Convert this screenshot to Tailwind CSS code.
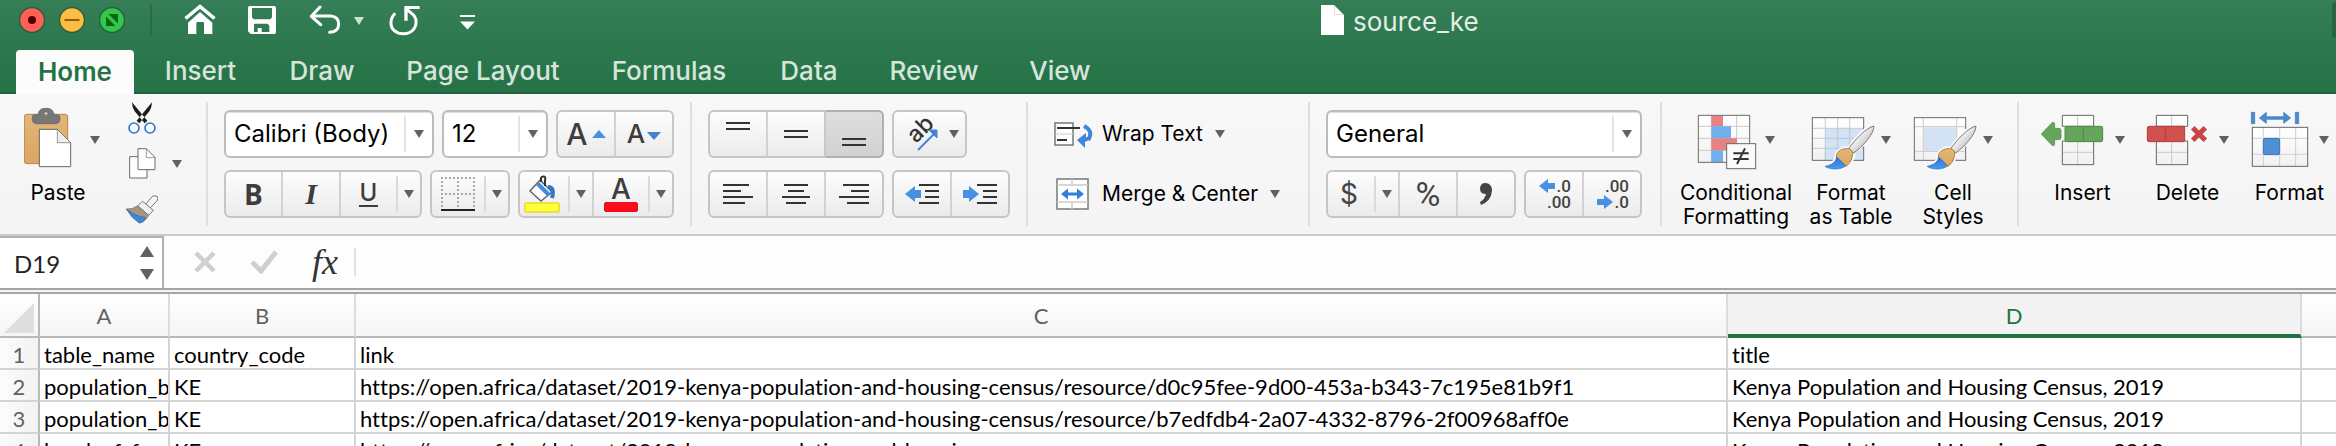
<!DOCTYPE html>
<html lang="en">
<head>
<meta charset="utf-8">
<title>source_ke</title>
<script src="https://cdn.jsdelivr.net/npm/@tailwindcss/browser@4"></script>
</head>
<body class="flex h-screen flex-col overflow-hidden bg-white font-['Inter','Liberation_Sans',sans-serif] text-black">

<svg class="absolute size-0" aria-hidden="true">
  <defs>
    <symbol id="caret" viewBox="0 0 10 8"><path d="M0 0h10L5 8z" fill="currentColor"/></symbol>
    <linearGradient id="sheet" x1="0" y1="0" x2="0" y2="1"><stop offset="0" stop-color="#fff"/><stop offset="1" stop-color="#f1f1f1"/></linearGradient>
    <linearGradient id="handle" x1="0" y1="0" x2="1" y2="1"><stop offset="0.3" stop-color="#fff"/><stop offset="0.7" stop-color="#c4c4c4"/></linearGradient>
    <linearGradient id="wood" x1="0" y1="0" x2="0" y2="1"><stop offset="0" stop-color="#e2b67a"/><stop offset="1" stop-color="#dba661"/></linearGradient>
    <linearGradient id="paint" x1="0" y1="0" x2="0" y2="1"><stop offset="0" stop-color="#2f74cf"/><stop offset="1" stop-color="#4a9bf2"/></linearGradient>
    <symbol id="brush" viewBox="0 0 160 140">
      <path d="M152 2C128 8 88 46 78 72C54 66 38 82 36 100C34 114 24 122 4 126C20 140 60 140 74 120C88 106 92 92 88 84C112 70 148 40 152 2z" fill="#fff" stroke="#fafafa" stroke-width="10" stroke-linejoin="round"/>
      <path d="M151 5C130 8 90 50 76 72L90 86C116 68 152 28 151 5z" fill="url(#handle)" stroke="#777" stroke-width="3"/>
      <path d="M38 98C38 84 50 74 66 73C82 71 90 80 86 96C83 112 76 118 68 126z" fill="url(#wood)" stroke="#b07d35" stroke-width="3"/>
      <path d="M39 98C36 114 24 122 4 126C22 138 52 136 66 125z" fill="url(#paint)" stroke="#2a66b5" stroke-width="2"/>
    </symbol>
  </defs>
</svg>

<header class="shrink-0 border-b-2 border-[#1f603d] bg-linear-to-b from-[#357e57] to-[#257246]">
  <div class="flex h-[50px] items-start">
    <div class="flex h-10 items-center gap-[14px] pl-[19px]">
      <button aria-label="Close" class="size-[26px]"><svg viewBox="0 0 26 26"><circle cx="13" cy="13" r="12.5" fill="#ff5f57" stroke="#27613f" stroke-width="1.5"/><circle cx="13" cy="13" r="4" fill="#4d0000"/></svg></button>
      <button aria-label="Minimize" class="size-[26px]"><svg viewBox="0 0 26 26"><circle cx="13" cy="13" r="12.5" fill="#febc40" stroke="#27613f" stroke-width="1.5"/><path d="M5.500 13h15" stroke="#985712" stroke-width="2"/></svg></button>
      <button aria-label="Zoom" class="size-[26px]"><svg viewBox="0 0 26 26"><circle cx="13" cy="13" r="12.500" fill="#34c848" stroke="#27613f" stroke-width="1.500"/><path d="M9.500 7H19v9.500zM7 9.500V19h9.500z" fill="#0b6412"/></svg></button>
    </div>
    <div class="mt-1 ml-[25px] h-8 w-[2px] bg-[#2a6a47]"></div>
    <button aria-label="Home" class="mt-1 ml-8"><svg class="h-[31px] w-8" viewBox="552 12 96 93"><path d="M553 52L600 13L647 52L640 59L600 26L560 59z" fill="#fff"/><path d="M564 68L600 36L637 68V102H612V70Q612 66 608 66H593Q589 66 589 70V102H564z" fill="#fff"/></svg></button>
    <button aria-label="Save" class="mt-[5px] ml-8"><svg class="h-[30px] w-7" viewBox="744 15 84 90"><path fill-rule="evenodd" d="M749 18H823Q828 18 828 23V97Q828 102 823 102H752L744 94V23Q744 18 749 18zM756 24V52L761 58H811L816 52V24zM762 72V96H773V84H785V96H808V77L803 71H767z" fill="#fff"/></svg></button>
    <button aria-label="Undo" class="mt-[5px] ml-[33px]"><svg class="h-[31px] w-[32px]" viewBox="927 15 96 93"><path d="M960 21L934 49L962 74M935 48H992Q1016 50 1016 72Q1016 96 989 97" fill="none" stroke="#fff" stroke-width="9" stroke-linecap="round" stroke-linejoin="round"/></svg></button>
    <button aria-label="Undo history" class="mt-[17px] ml-[13px] text-[#d2e1d8]"><svg class="h-2 w-[10px]"><use href="#caret"/></svg></button>
    <button aria-label="Redo" class="mt-[5px] ml-[25px]"><svg class="h-[31px] w-[31px]" viewBox="1168 15 93 93"><path d="M1187 40C1170 54 1170 80 1184 92C1200 106 1226 104 1240 90C1254 74 1252 52 1236 40L1220 27" fill="none" stroke="#fff" stroke-width="9"/><path d="M1214 18H1260V27H1224V62H1214z" fill="#fff"/></svg></button>
    <button aria-label="Customize toolbar" class="mt-[15px] ml-10"><svg class="h-[15px] w-[15px]" viewBox="0 0 15 15"><path d="M0 0h15v2H0zM0 6.500h15L7.500 14.500z" fill="#fff"/></svg></button>
    <div class="ml-[846px] flex h-10 items-center gap-[9px]">
      <svg class="h-[30px] w-[23px]" viewBox="0 0 23 30"><path d="M0 0H13L23 10V30H0z" fill="#fff"/><path d="M13.500 1V9.500H22" fill="none" stroke="#ddd" stroke-width="1"/></svg>
      <h1 class="pt-1 text-[26px] leading-7 text-[#e2ede6]">source_ke</h1>
    </div>
    <div class="mt-[2px] ml-auto h-9 w-1 rounded-l bg-[#2b6343]"></div>
  </div>
  <nav aria-label="Ribbon tabs" class="flex h-[42px] pl-4 text-[26px] leading-[42px] font-medium text-[#d6e5db]">
    <button class="-mb-[2px] mr-1 w-[118px] rounded-t-[4px] bg-[#fcfcfc] font-semibold text-[#257246]">Home</button>
    <button class="w-[125px]">Insert</button>
    <button class="w-[118px]">Draw</button>
    <button class="w-[204px]">Page Layout</button>
    <button class="w-[168px]">Formulas</button>
    <button class="w-[112px]">Data</button>
    <button class="w-[138px]">Review</button>
    <button class="w-[114px]">View</button>
  </nav>
</header>

<section aria-label="Home ribbon" class="flex h-[142px] shrink-0 items-start border-b-2 border-[#cbcbcb] bg-linear-to-b from-[#f8f8f8] to-[#f4f4f4] text-[21px] leading-6 text-[#616161]">

  <button class="mt-3 ml-4 flex w-[84px] flex-col">
    <span class="flex items-center gap-[18px] pl-2">
      <svg class="h-[68px] w-12" viewBox="72 318 144 204">
        <rect x="73" y="343" width="130" height="148" rx="8" fill="url(#wood)" stroke="#b98747" stroke-width="3"/>
        <path fill-rule="evenodd" d="M104 344H114C116 330 124 325 138 325S160 330 162 344H172Q180 344 180 352V360Q178 371 166 371H110Q98 371 97 360V352Q97 344 104 344zM138 336a6 6 0 1 0 .1 0z" fill="#777" stroke="#5f5f5f" stroke-width="2"/>
        <path d="M118 388H172L212 428V500H118z" fill="#fff" stroke="#666" stroke-width="3"/><path d="M172 389V428H211" fill="#eee" stroke="#666" stroke-width="2"/>
      </svg>
      <svg class="h-2 w-[10px]"><use href="#caret"/></svg>
    </span>
    <span class="mt-[7px] self-center text-black">Paste</span>
  </button>
  <div class="mt-2 ml-6 flex w-[60px] flex-col items-start">
    <button aria-label="Cut"><svg class="ml-1 h-8 w-7" viewBox="384 306 84 96"><path d="M396 307Q396 322 404 334L434 370L442 362zM456 307Q456 322 448 334L418 370L410 362z" fill="#1b1b1b"/><g fill="#fff" stroke="#2f78cc" stroke-width="5"><circle cx="402" cy="384" r="15"/><circle cx="450" cy="384" r="15"/></g></svg></button>
    <button aria-label="Copy" class="mt-[14px] flex w-full items-center justify-between pl-[5px] pr-[2px]"><svg class="h-[31px] w-[27px]" viewBox="386 446 81 93"><path d="M388 472H440V536H388z" fill="#fff" stroke="#6a6a6a" stroke-width="3"/><path d="M413 448H438L464 474V511H413z" fill="#fff" stroke="#6a6a6a" stroke-width="3"/><path d="M438 449V475H463" fill="none" stroke="#6a6a6a" stroke-width="2"/></svg><svg class="h-2 w-[10px]"><use href="#caret"/></svg></button>
    <button aria-label="Format painter" class="mt-4 ml-[2px]"><svg class="h-[29px] w-8" viewBox="378 587 96 87"><path d="M436 616L456 592Q466 586 472 592Q476 598 470 606L448 628z" fill="#f6f6f6" stroke="#777" stroke-width="3"/><path d="M413 619L428 606L460 633L446 648z" fill="#efefef" stroke="#777" stroke-width="3"/><path d="M411 620Q398 630 379 629L418 671Q436 668 446 648z" fill="#a9957c" stroke="#746b5e" stroke-width="2"/><path d="M379 629Q408 652 436 654Q434 668 418 671Q394 656 379 629z" fill="#3f86d8" stroke="#2b69b3" stroke-width="2"/></svg></button>
  </div>

  <div class="mt-2 ml-[22px] h-[124px] w-[2px] bg-[#dfdfdf]"></div>

  <div class="mt-4 ml-4 flex flex-col gap-3">
    <div class="flex gap-2">
      <div class="flex h-12 w-[210px] items-center rounded-[6px] border-2 border-[#bcbcbc] bg-white pr-2 shadow-[inset_0_1px_1px_#ddd]">
        <select aria-label="Font" class="min-w-0 flex-1 appearance-none bg-transparent pl-2 text-[24px] leading-8 text-black"><option>Calibri (Body)</option></select>
        <span class="mr-2 h-9 w-[2px] bg-[#e4e4e4]"></span><svg class="h-2 w-[10px]"><use href="#caret"/></svg>
      </div>
      <div class="flex h-12 w-[106px] items-center rounded-[6px] border-2 border-[#bcbcbc] bg-white pr-2 shadow-[inset_0_1px_1px_#ddd]">
        <select aria-label="Font size" class="min-w-0 flex-1 appearance-none bg-transparent pl-2 text-[24px] leading-8 text-black"><option>12</option></select>
        <span class="mr-2 h-9 w-[2px] bg-[#e4e4e4]"></span><svg class="h-2 w-[10px]"><use href="#caret"/></svg>
      </div>
      <div class="flex h-12 w-[118px] rounded-[6px] border-2 border-[#c6c6c6] bg-linear-to-b from-[#fdfdfd] to-[#ebebeb] font-medium text-[#3d3d3d]">
        <button aria-label="Increase font size" class="flex flex-1 items-center justify-center gap-1 border-r-2 border-[#d2d2d2]"><span class="text-[30px]">A</span><svg class="h-2 w-[14px]" viewBox="0 0 14 8"><path d="M7 0L14 8H0z" fill="#4790e2"/></svg></button>
        <button aria-label="Decrease font size" class="flex flex-1 items-center justify-center gap-[2px]"><span class="text-[26px]">A</span><svg class="mt-1 h-2 w-[14px]" viewBox="0 0 14 8"><path d="M0 0H14L7 8z" fill="#4382cd"/></svg></button>
      </div>
    </div>
    <div class="flex gap-2 text-[#3d3d3d]">
      <div class="flex h-12 w-[198px] items-stretch rounded-[6px] border-2 border-[#c6c6c6] bg-linear-to-b from-[#fdfdfd] to-[#ebebeb]">
        <button aria-label="Bold" class="w-[57px] border-r-2 border-[#d2d2d2] font-['Open_Sans',sans-serif] text-[28px] font-bold">B</button>
        <button aria-label="Italic" class="w-[58px] border-r-2 border-[#d2d2d2] font-['Liberation_Serif',serif] text-[30px] font-bold italic">I</button>
        <button aria-label="Underline" class="flex flex-1 items-center justify-center"><span class="border-b-2 border-[#3d3d3d] px-[1px] text-[24px] font-medium">U</span></button>
        <span class="my-1 w-[2px] bg-[#dadada]"></span>
        <button aria-label="Underline style" class="flex w-[22px] items-center justify-center text-[#616161]"><svg class="h-2 w-[10px]"><use href="#caret"/></svg></button>
      </div>
      <div class="flex h-12 w-[80px] items-stretch rounded-[6px] border-2 border-[#c6c6c6] bg-linear-to-b from-[#fdfdfd] to-[#ebebeb]">
        <button aria-label="Borders" class="flex flex-1 items-center justify-center"><svg class="size-9" viewBox="0 0 36 36"><path d="M1 2H35M2 1V31M1 18H35M18 1V31M34 1V31" fill="none" stroke="#a9a9a9" stroke-width="2" stroke-dasharray="2 2"/><path d="M1 34H35" stroke="#222" stroke-width="2"/></svg></button>
        <span class="my-1 w-[2px] bg-[#dadada]"></span>
        <button aria-label="Border style" class="flex w-[22px] items-center justify-center text-[#616161]"><svg class="h-2 w-[10px]"><use href="#caret"/></svg></button>
      </div>
      <div class="flex h-12 w-[156px] items-stretch rounded-[6px] border-2 border-[#c6c6c6] bg-linear-to-b from-[#fdfdfd] to-[#ebebeb]">
        <button aria-label="Fill color" class="flex w-[48px] items-center justify-center pr-1"><svg class="h-10 w-9" viewBox="0 0 36 40">
          <path d="M16 6L28 18L17 27L6 17z" fill="#fff" stroke="#666" stroke-width="1.500"/><path d="M12 11L15 8L26 19L23 22z" fill="#3f8de0"/><path d="M24 13Q31 13 28 24" fill="none" stroke="#2f7acb" stroke-width="4"/><path d="M17 8V4Q18 2 20 2.500Q22 3 21 6V12" fill="none" stroke="#333" stroke-width="2"/><rect x="1" y="29" width="34" height="9" rx="1" fill="#ffff3c" stroke="#e3dd22" stroke-width="1.500"/></svg></button>
        <span class="my-1 w-[2px] bg-[#dadada]"></span>
        <button aria-label="Fill color menu" class="flex w-[24px] items-center justify-center border-r-2 border-[#d2d2d2] text-[#616161]"><svg class="h-2 w-[10px]"><use href="#caret"/></svg></button>
        <button aria-label="Font color" class="flex flex-1 flex-col items-center justify-center"><span class="text-[28px] leading-[26px] font-medium">A</span><span class="h-[10px] w-[34px] rounded-[2px] border border-[#e01020] bg-[#ff0a1a]"></span></button>
        <span class="my-1 w-[2px] bg-[#dadada]"></span>
        <button aria-label="Font color menu" class="flex w-[22px] items-center justify-center text-[#616161]"><svg class="h-2 w-[10px]"><use href="#caret"/></svg></button>
      </div>
    </div>
  </div>

  <div class="mt-2 ml-4 h-[124px] w-[2px] bg-[#dfdfdf]"></div>

  <div class="mt-4 ml-4 flex flex-col gap-3 text-[#3d3d3d]">
    <div class="flex gap-2">
      <div class="flex h-12 w-[176px] rounded-[6px] border-2 border-[#c6c6c6] bg-linear-to-b from-[#fdfdfd] to-[#ebebeb]">
        <button aria-label="Top align" class="flex flex-1 items-center justify-center border-r-2 border-[#d2d2d2]"><svg class="h-9 w-6" viewBox="0 0 24 36"><path d="M0 7H24M0 13H24" stroke="#333" stroke-width="2"/></svg></button>
        <button aria-label="Middle align" class="flex flex-1 items-center justify-center border-r-2 border-[#c9c9c9]"><svg class="h-9 w-6" viewBox="0 0 24 36"><path d="M0 15H24M0 21H24" stroke="#333" stroke-width="2"/></svg></button>
        <button aria-label="Bottom align" aria-pressed="true" class="-my-[2px] -mr-[2px] flex flex-1 items-center justify-center rounded-r-[6px] border-y-2 border-r-2 border-[#b0b0b0] bg-linear-to-b from-[#dedede] to-[#d2d2d2]"><svg class="h-9 w-6" viewBox="0 0 24 36"><path d="M0 23H24M0 29H24" stroke="#333" stroke-width="2"/></svg></button>
      </div>
      <button aria-label="Orientation" class="flex h-12 w-[75px] items-center justify-between rounded-[6px] border-2 border-[#c6c6c6] bg-linear-to-b from-[#fdfdfd] to-[#ebebeb] pr-[6px] pl-[10px]">
        <svg class="h-9 w-9 overflow-visible" viewBox="0 0 36 36"><text x="0" y="0" transform="translate(12 28) rotate(-45)" font-family="Inter" font-size="23" font-weight="500" fill="#333">ab</text><path d="M14 34L30 18" stroke="#3f86d8" stroke-width="2"/><path d="M33 14V22L25 14z" fill="#3f86d8" stroke="#3f86d8"/></svg>
        <svg class="h-2 w-[10px] text-[#616161]"><use href="#caret"/></svg>
      </button>
    </div>
    <div class="flex gap-2">
      <div class="flex h-12 w-[176px] rounded-[6px] border-2 border-[#c6c6c6] bg-linear-to-b from-[#fdfdfd] to-[#ebebeb]">
        <button aria-label="Align left" class="flex flex-1 items-center justify-center border-r-2 border-[#d2d2d2]"><svg class="h-6 w-[30px]" viewBox="0 0 30 24"><path d="M0 3H26M0 9H18M0 15H30M0 21H22" stroke="#333" stroke-width="2"/></svg></button>
        <button aria-label="Center" class="flex flex-1 items-center justify-center border-r-2 border-[#d2d2d2]"><svg class="h-6 w-[30px]" viewBox="0 0 30 24"><path d="M3 3H27M7 9H23M1 15H29M5 21H25" stroke="#333" stroke-width="2"/></svg></button>
        <button aria-label="Align right" class="flex flex-1 items-center justify-center"><svg class="h-6 w-[30px]" viewBox="0 0 30 24"><path d="M4 3H30M12 9H30M0 15H30M8 21H30" stroke="#333" stroke-width="2"/></svg></button>
      </div>
      <div class="flex h-12 w-[118px] rounded-[6px] border-2 border-[#c6c6c6] bg-linear-to-b from-[#fdfdfd] to-[#ebebeb]">
        <button aria-label="Decrease indent" class="flex flex-1 items-center justify-center border-r-2 border-[#d2d2d2]"><svg class="h-6 w-[34px]" viewBox="0 0 34 24"><path d="M14 3H34M20 9H34M20 15H34M14 21H34" stroke="#333" stroke-width="2"/><path d="M0 12L10 4V8H16V16H10V20z" fill="#4790e2"/></svg></button>
        <button aria-label="Increase indent" class="flex flex-1 items-center justify-center"><svg class="h-6 w-[34px]" viewBox="0 0 34 24"><path d="M14 3H34M20 9H34M20 15H34M14 21H34" stroke="#333" stroke-width="2"/><path d="M16 12L6 4V8H0V16H6V20z" fill="#4790e2"/></svg></button>
      </div>
    </div>
  </div>

  <div class="mt-2 ml-4 h-[124px] w-[2px] bg-[#dfdfdf]"></div>

  <div class="mt-4 ml-[26px] flex w-[230px] flex-col gap-3">
    <button class="flex h-12 items-center">
      <svg class="h-[34px] w-10" viewBox="0 0 40 34"><rect x="1" y="6" width="18" height="22" fill="#fff" stroke="#777" stroke-width="1.500"/><path d="M1 17H19" stroke="#ccc"/><path d="M3 11H26M3 23H13" stroke="#333" stroke-width="2"/><path d="M30 9Q40 14 34 23" fill="none" stroke="#3f86d8" stroke-width="4"/><path d="M23 23L32 16V20L37 22L31 25V31z" fill="#3f86d8"/></svg>
      <span class="ml-2 text-black">Wrap Text</span><svg class="ml-3 h-2 w-[10px]"><use href="#caret"/></svg>
    </button>
    <button class="flex h-12 items-center">
      <svg class="h-[34px] w-10" viewBox="0 0 40 34"><rect x="3" y="2" width="31" height="30" fill="#fff" stroke="#777" stroke-width="1.500"/><path d="M3 8H34M3 25H34M18 2V8M18 25V32" stroke="#ccc" stroke-width="1.500"/><path d="M7 17L14 11.500V15.500H23V11.500L30 17L23 22.500V18.500H14V22.500z" fill="#2f7fdc"/></svg>
      <span class="ml-2 text-black">Merge &amp; Center</span><svg class="ml-3 h-2 w-[10px]"><use href="#caret"/></svg>
    </button>
  </div>

  <div class="mt-2 ml-6 h-[124px] w-[2px] bg-[#dfdfdf]"></div>

  <div class="mt-4 ml-4 flex w-[316px] flex-col gap-3">
    <div class="flex h-12 items-center rounded-[6px] border-2 border-[#bcbcbc] bg-white pr-2 shadow-[inset_0_1px_1px_#ddd]">
      <select aria-label="Number format" class="min-w-0 flex-1 appearance-none bg-transparent pl-2 text-[24px] leading-8 text-black"><option>General</option></select>
      <span class="mr-2 h-9 w-[2px] bg-[#e4e4e4]"></span><svg class="h-2 w-[10px]"><use href="#caret"/></svg>
    </div>
    <div class="flex justify-between text-[#444]">
      <div class="flex h-12 w-[190px] items-stretch rounded-[6px] border-2 border-[#c6c6c6] bg-linear-to-b from-[#fdfdfd] to-[#ebebeb]">
        <button aria-label="Currency" class="flex-1 pr-1 text-[28px]">$</button>
        <span class="my-1 w-[2px] bg-[#dadada]"></span>
        <button aria-label="Currency menu" class="flex w-6 items-center justify-center border-r-2 border-[#d2d2d2] text-[#616161]"><svg class="h-2 w-[10px]"><use href="#caret"/></svg></button>
        <button aria-label="Percent" class="w-[58px] border-r-2 border-[#d2d2d2] font-['Roboto',sans-serif] text-[34px]">%</button>
        <button aria-label="Comma" class="flex w-[56px] items-center justify-center"><svg class="h-6 w-[14px]" viewBox="0 0 14 24"><path d="M6 1Q13 1 13 9Q12 19 2 23L1 20Q6 17 7 12Q1 12 1 6.500Q1.500 1 6 1z" fill="#444"/></svg></button>
      </div>
      <div class="flex h-12 w-[118px] rounded-[6px] border-2 border-[#c6c6c6] bg-linear-to-b from-[#fdfdfd] to-[#ebebeb] font-['Roboto',sans-serif] text-[17px] leading-4 font-medium">
        <button aria-label="Increase decimals" class="flex flex-1 flex-col items-end justify-center border-r-2 border-[#d2d2d2] pr-[11px]"><span class="flex items-center gap-[2px]"><svg class="h-[14px] w-4" viewBox="0 0 16 14"><path d="M0 7L9 0V4H16V10H9V14z" fill="#4790e2"/></svg>.0</span><span>.00</span></button>
        <button aria-label="Decrease decimals" class="flex flex-1 flex-col items-end justify-center pr-[11px]"><span>.00</span><span class="flex items-center gap-[2px]"><svg class="h-[14px] w-4" viewBox="0 0 16 14"><path d="M16 7L7 0V4H0V10H7V14z" fill="#4790e2"/></svg>.0</span></button>
      </div>
    </div>
  </div>

  <div class="mt-2 ml-[18px] h-[124px] w-[2px] bg-[#dfdfdf]"></div>

  <button class="mt-3 ml-4 flex w-[116px] flex-col items-center">
    <span class="flex items-center gap-2">
      <svg class="h-[68px] w-[60px]" viewBox="54 3 180 204">
        <rect x="58" y="31" width="154" height="141" fill="url(#sheet)"/><path d="M58 64H212M58 100H212M58 136H212M97 31V172M173 31V172" stroke="#c9c9c9" stroke-width="3"/>
        <path d="M97 32H132V64H97zM97 100H174V136H97z" fill="#e88181"/><path d="M97 64H156V100H97zM97 136H132V171H97z" fill="#72aeec"/>
        <rect x="58" y="31" width="154" height="141" fill="none" stroke="#6b6b6b" stroke-width="3"/>
        <rect x="143" y="116" width="87" height="75" fill="#fafafa" stroke="#6b6b6b" stroke-width="3"/><path d="M163 145H209M163 162H209M198 130L174 177" stroke="#333" stroke-width="6"/>
      </svg>
      <svg class="h-2 w-[10px]"><use href="#caret"/></svg>
    </span>
    <span class="mt-[7px] text-black">Conditional<br>Formatting</span>
  </button>
  <button class="mt-3 ml-2 flex w-[98px] flex-col items-center">
    <span class="flex items-center gap-[5px]">
      <svg class="h-[68px] w-[65px]" viewBox="396 3 195 204">
        <rect x="400" y="38" width="154" height="128" fill="url(#sheet)"/><rect x="439" y="70" width="114" height="96" fill="#d4e3f4"/><path d="M400 70H554M400 100H440M400 130H440M439 38V70M476 38V70M512 38V70M439 130V166" stroke="#cacaca" stroke-width="3"/><path d="M439 70V166M476 70V166M512 70V166M439 100H554M439 130H554" stroke="#b2c8e0" stroke-width="3"/>
        <rect x="400" y="38" width="154" height="128" fill="none" stroke="#6b6b6b" stroke-width="3"/>
        <use href="#brush" x="434" y="58" width="160" height="140"/>
      </svg>
      <svg class="h-2 w-[10px]"><use href="#caret"/></svg>
    </span>
    <span class="mt-[7px] text-black">Format<br>as Table</span>
  </button>
  <button class="mt-3 ml-[11px] flex w-[84px] flex-col items-center">
    <span class="flex items-center gap-[5px]">
      <svg class="h-[68px] w-[65px]" viewBox="702 3 195 204">
        <rect x="706" y="38" width="154" height="128" fill="url(#sheet)"/><path d="M706 65H860M706 139H860M733 38V166M833 38V166" stroke="#cacaca" stroke-width="3"/><rect x="735" y="67" width="96" height="71" fill="#d4e3f4"/>
        <rect x="706" y="38" width="154" height="128" fill="none" stroke="#6b6b6b" stroke-width="3"/>
        <use href="#brush" x="740" y="58" width="160" height="140"/>
      </svg>
      <svg class="h-2 w-[10px]"><use href="#caret"/></svg>
    </span>
    <span class="mt-[7px] text-black">Cell<br>Styles</span>
  </button>

  <div class="mt-2 ml-[22px] h-[124px] w-[2px] bg-[#dfdfdf]"></div>

  <button class="mt-3 ml-5 flex w-[87px] flex-col items-center">
    <span class="flex items-center gap-[11px]">
      <svg class="h-[68px] w-16" viewBox="63 3 192 204">
        <path d="M130 31H224V64H130zM130 108H224V179H130z" fill="url(#sheet)"/><path d="M176 31V179M130 142H224" stroke="#cacaca" stroke-width="3"/><path d="M130 31H224V64H130zM130 108H224V179H130z" fill="none" stroke="#666" stroke-width="3"/>
        <rect x="138" y="64" width="113" height="46" rx="5" fill="#67a45c" stroke="#4c8a43" stroke-width="3"/><path d="M193 64V110" stroke="#4c8a43" stroke-width="3"/>
        <path d="M67 87L99 53Q106 50 107 56V70H120Q126 70 126 76V98Q126 104 120 104H107V118Q106 124 99 121z" fill="#67a45c" stroke="#4c8a43" stroke-width="2"/>
      </svg>
      <svg class="h-2 w-[10px]"><use href="#caret"/></svg>
    </span>
    <span class="mt-[7px] text-black">Insert</span>
  </button>
  <button class="mt-3 ml-[18px] flex w-[87px] flex-col items-center">
    <span class="flex items-center gap-[10px]">
      <svg class="h-[68px] w-[63px]" viewBox="381 3 189 204">
        <path d="M412 31H506V64H412zM412 108H506V179H412z" fill="url(#sheet)"/><path d="M458 31V179M412 142H506" stroke="#cacaca" stroke-width="3"/><path d="M412 31H506V64H412zM412 108H506V179H412z" fill="none" stroke="#666" stroke-width="3"/>
        <rect x="385" y="64" width="112" height="46" rx="5" fill="#d0524f" stroke="#b53c3b" stroke-width="3"/><path d="M439 64V110" stroke="#b53c3b" stroke-width="3"/>
        <path d="M521 68L559 106M559 68L521 106" stroke="#c94544" stroke-width="15"/>
      </svg>
      <svg class="h-2 w-[10px]"><use href="#caret"/></svg>
    </span>
    <span class="mt-[7px] text-black">Delete</span>
  </button>
  <button class="mt-3 ml-[15px] flex w-[87px] flex-col items-center">
    <span class="flex items-center gap-[10px]">
      <svg class="h-[68px] w-[59px]" viewBox="693 3 177 204">
        <path d="M697 22H707V56H697zM829 22H839V56H829zM721 39L742 22V35H794V22L815 39L794 55V43H742V55z" fill="#4a8bd0" stroke="#3b75b6" stroke-width="2"/>
        <rect x="700" y="67" width="166" height="117" fill="url(#sheet)"/><path d="M700 100H866M700 148H866M733 67V184M782 67V184M830 67V184" stroke="#cfcfcf" stroke-width="3"/><rect x="700" y="67" width="166" height="117" fill="none" stroke="#666" stroke-width="3"/>
        <rect x="733" y="100" width="49" height="49" rx="5" fill="#4f8fd3" stroke="#3b75b6" stroke-width="3"/>
      </svg>
      <svg class="h-2 w-[10px]"><use href="#caret"/></svg>
    </span>
    <span class="mt-[7px] text-black">Format</span>
  </button>
</section>

<section aria-label="Formula bar" class="flex h-[52px] shrink-0 items-stretch bg-[#fdfdfd] font-['Lato',sans-serif]">
  <div class="flex w-[164px] items-center border-t-2 border-r-2 border-[#b0b0b0] bg-white pr-2">
    <input aria-label="Name box" value="D19" class="min-w-0 flex-1 pt-[2px] pl-[14px] text-[24px] text-[#222]">
    <button aria-label="Step cell" class="text-[#616161]"><svg class="h-[34px] w-[14px]" viewBox="0 0 14 34"><path d="M7 0L14 11H0zM0 23H14L7 34z" fill="currentColor"/></svg></button>
  </div>
  <button aria-label="Cancel" class="ml-[30px]"><svg class="size-[22px]" viewBox="0 0 22 22"><path d="M2 2L20 20M20 2L2 20" stroke="#cfcfcf" stroke-width="4.500"/></svg></button>
  <button aria-label="Enter" class="ml-[34px]"><svg class="h-6 w-7" viewBox="0 0 28 24"><path d="M2 12L11 21L26 2" fill="none" stroke="#cfcfcf" stroke-width="5"/></svg></button>
  <button aria-label="Insert function" class="ml-[32px] w-[30px] font-['Liberation_Serif',serif] text-[36px] leading-[48px] text-[#333] italic">fx</button>
  <span class="my-3 ml-[14px] w-[2px] bg-[#e2e2e2]"></span>
  <input aria-label="Formula" class="min-w-0 flex-1 px-2 text-[22px]">
</section>
<div class="h-[6px] shrink-0 border-t-2 border-b-2 border-[#a6a6a6] bg-[#f4f4f4]"></div>

<table class="w-full shrink-0 table-fixed border-separate border-spacing-0 font-['Lato',sans-serif] text-[22px] leading-[26px] [font-variant-ligatures:none]">
  <colgroup><col class="w-10"><col class="w-[130px]"><col class="w-[186px]"><col class="w-[1372px]"><col class="w-[574px]"><col></colgroup>
  <thead class="bg-linear-to-b from-[#fefefe] to-[#f5f5f5] text-[#616161]">
    <tr class="h-11 *:border-b-2 *:border-[#b9b9b9] *:p-0 *:pt-[2px] *:font-normal">
      <th class="border-r-2"><svg class="mt-1 ml-1 h-[30px] w-[30px]" viewBox="0 0 30 30"><path d="M30 0V30H0z" fill="#dedede"/></svg></th>
      <th scope="col" class="border-r-2 border-r-[#dcdcdc]!">A</th>
      <th scope="col" class="border-r-2 border-r-[#dcdcdc]!">B</th>
      <th scope="col" class="border-r-2 border-r-[#dcdcdc]!">C</th>
      <th scope="col" class="border-r-2 border-r-[#dcdcdc]! border-b-4! border-b-[#217346]! bg-[#f2f2f2] pt-1! text-[#217346]">D</th>
      <th></th>
    </tr>
  </thead>
  <tbody class="whitespace-nowrap">
    <tr class="*:h-8 *:overflow-hidden *:border-b-2 *:border-[#d4d4d4] *:p-0 *:pt-1 *:pl-1">
      <th scope="row" class="border-r-2 border-r-[#b9b9b9]! bg-linear-to-r from-[#fcfcfc] to-[#f2f2f2] pr-1! font-normal text-[#616161]">1</th><td class="border-r-2">table_name</td><td class="border-r-2">country_code</td><td class="border-r-2">link</td><td class="border-r-2">title</td><td></td>
    </tr>
    <tr class="*:h-8 *:overflow-hidden *:border-b-2 *:border-[#d4d4d4] *:p-0 *:pt-1 *:pl-1">
      <th scope="row" class="border-r-2 border-r-[#b9b9b9]! bg-linear-to-r from-[#fcfcfc] to-[#f2f2f2] pr-1! font-normal text-[#616161]">2</th><td class="border-r-2">population_by</td><td class="border-r-2">KE</td><td class="border-r-2">https://open.africa/dataset/2019-kenya-population-and-housing-census/resource/d0c95fee-9d00-453a-b343-7c195e81b9f1</td><td class="border-r-2">Kenya Population and Housing Census, 2019</td><td></td>
    </tr>
    <tr class="*:h-8 *:overflow-hidden *:border-b-2 *:border-[#d4d4d4] *:p-0 *:pt-1 *:pl-1">
      <th scope="row" class="border-r-2 border-r-[#b9b9b9]! bg-linear-to-r from-[#fcfcfc] to-[#f2f2f2] pr-1! font-normal text-[#616161]">3</th><td class="border-r-2">population_by</td><td class="border-r-2">KE</td><td class="border-r-2">https://open.africa/dataset/2019-kenya-population-and-housing-census/resource/b7edfdb4-2a07-4332-8796-2f00968aff0e</td><td class="border-r-2">Kenya Population and Housing Census, 2019</td><td></td>
    </tr>
    <tr class="*:h-8 *:overflow-hidden *:border-b-2 *:border-[#d4d4d4] *:p-0 *:pt-1 *:pl-1">
      <th scope="row" class="border-r-2 border-r-[#b9b9b9]! bg-linear-to-r from-[#fcfcfc] to-[#f2f2f2] pr-1! font-normal text-[#616161]">4</th><td class="border-r-2">head_of_family</td><td class="border-r-2">KE</td><td class="border-r-2">https://open.africa/dataset/2019-kenya-population-and-housing-census</td><td class="border-r-2">Kenya Population and Housing Census, 2019</td><td></td>
    </tr>
  </tbody>
</table>
</body>
</html>
